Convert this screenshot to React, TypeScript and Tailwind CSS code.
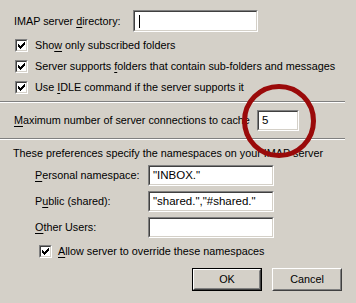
import React from 'react';

const font = { fontFamily: '"Liberation Sans", Arial, sans-serif' };

const U: React.FC<{ children: React.ReactNode }> = ({ children }) => <span className="underline underline-offset-[2px]">{children}</span>;

// sunken 3D field, classic Windows look
const Field: React.FC<{ className?: string; children?: React.ReactNode }> = ({ className = '', children }) => (
  <div className={`border border-t-[#808080] border-l-[#808080] border-b-white border-r-white ${className}`}>
    <div className="h-full border border-t-[#404040] border-l-[#404040] border-b-[#d4d0c8] border-r-[#d4d0c8] bg-white flex items-center px-[3px] text-[11.5px] text-black">
      {children}
    </div>
  </div>
);

const Check: React.FC = () => (
  <div className="w-[13px] h-[13px] shrink-0 border border-t-[#808080] border-l-[#808080] border-b-white border-r-white">
    <div className="w-full h-full border border-t-[#404040] border-l-[#404040] border-b-[#d4d0c8] border-r-[#d4d0c8] bg-white flex items-center justify-center">
      <svg width="7" height="7" viewBox="0 0 7 7">
        <path d="M0 2h1v1h1v1h1v-1h1v-1h1v-1h1v-1h1v3h-1v1h-1v1h-1v1h-1v1h-1v-1h-1v-1h-1v-1h-1z" fill="#000" />
      </svg>
    </div>
  </div>
);

const CheckRow: React.FC<{ children: React.ReactNode }> = ({ children }) => (
  <div className="h-[21px] flex items-center gap-[7px]">
    <Check />
    <span>{children}</span>
  </div>
);

const Separator: React.FC = () => (
  <div className="w-[345px]">
    <div className="h-px bg-[#808080]" />
    <div className="h-px bg-white" />
  </div>
);

const Button: React.FC<{ children: React.ReactNode; primary?: boolean }> = ({ children, primary }) => (
  <div className={`w-[70px] h-[23px] ${primary ? 'border border-black' : ''}`}>
    <div className="h-full border border-t-white border-l-white border-b-[#404040] border-r-[#404040]">
      <div className="h-full border border-t-[#d4d0c8] border-l-[#d4d0c8] border-b-[#808080] border-r-[#808080] flex items-center justify-center">
        {children}
      </div>
    </div>
  </div>
);

const App: React.FC = () => {
  return (
    <div className="relative w-[356px] h-[303px] bg-[#d4d0c8] text-black text-[10.8px] leading-none overflow-hidden" style={font}>
      {/* IMAP directory */}
      <div className="flex items-center pt-[10px] pl-[14px]">
        <span className="w-[119px]">IMAP server <U>d</U>irectory:</span>
        <Field className="w-[125px] h-[22px]">
          <div className="w-px h-[13px] bg-black ml-[1px]" />
        </Field>
      </div>

      {/* Folder options */}
      <div className="pl-[15px] pt-[3px]">
        <CheckRow>Sho<U>w</U> only subscribed folders</CheckRow>
        <CheckRow>Server supports <U>f</U>olders that contain sub-folders and messages</CheckRow>
        <CheckRow>Use <U>I</U>DLE command if the server supports it</CheckRow>
      </div>

      <div className="pt-[3px]"><Separator /></div>

      {/* Connections */}
      <div className="flex items-center pt-[7px] pl-[14px] h-[21px] box-content">
        <span className="w-[243px]"><U>M</U>aximum number of server connections to cache</span>
        <Field className="w-[42px] h-[21px]">5</Field>
      </div>

      <div className="pt-[7px]"><Separator /></div>

      {/* Namespaces */}
      <div className="pl-[13px] pt-[8px] h-[16px] box-content">These preferences specify the namespaces on your IMAP server</div>
      <div className="pl-[35px] pt-[1px] flex flex-col gap-[5px]">
        <div className="flex items-center h-[21px]">
          <span className="w-[113px]"><U>P</U>ersonal namespace:</span>
          <Field className="w-[126px] h-[21px]">"INBOX."</Field>
        </div>
        <div className="flex items-center h-[21px]">
          <span className="w-[113px]">P<U>u</U>blic (shared):</span>
          <Field className="w-[126px] h-[21px]">"shared.","#shared."</Field>
        </div>
        <div className="flex items-center h-[21px]">
          <span className="w-[113px]"><U>O</U>ther Users:</span>
          <Field className="w-[126px] h-[21px]" />
        </div>
      </div>

      <div className="pl-[39px] pt-[7px]">
        <div className="h-[13px] flex items-center gap-[6px]">
          <Check />
          <span><U>A</U>llow server to override these namespaces</span>
        </div>
      </div>

      {/* Buttons */}
      <div className="flex gap-[10px] pl-[192px] pt-[10px]">
        <Button primary>OK</Button>
        <Button>Cancel</Button>
      </div>

      {/* red annotation circle */}
      <svg className="absolute left-[241px] top-[83px]" width="76" height="76" viewBox="0 0 76 76">
        <circle cx="38" cy="38" r="34.5" fill="none" stroke="#9a0a0a" strokeWidth="5" />
      </svg>
    </div>
  );
};

export default App;
